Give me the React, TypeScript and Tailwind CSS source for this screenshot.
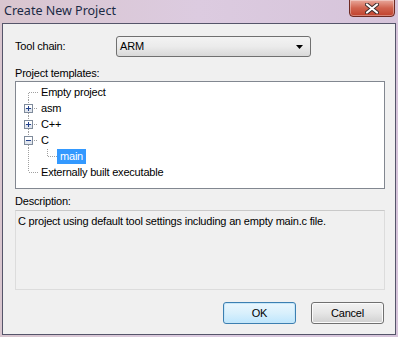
import React from 'react';

type Row = {
  label: string;
  kind: 'first' | 'plus' | 'minus' | 'child' | 'last';
  selected?: boolean;
};

const rows: Row[] = [
  { label: 'Empty project', kind: 'first' },
  { label: 'asm', kind: 'plus' },
  { label: 'C++', kind: 'plus' },
  { label: 'C', kind: 'minus' },
  { label: 'main', kind: 'child', selected: true },
  { label: 'Externally built executable', kind: 'last' },
];

const dot = { stroke: '#a0a0a0', strokeWidth: 1, strokeDasharray: '1 1' };

const Expander: React.FC<{ open: boolean }> = ({ open }) => (
  <g>
    <rect x="8.5" y="4.5" width="8" height="8" fill="#e1e6ee" stroke="#7f8b9b" />
    <rect x="9" y="5" width="7" height="3" fill="#ffffff" />
    <path d="M10 8.5h5" stroke="#22418c" strokeWidth="1" />
    {!open && <path d="M12.5 6v5" stroke="#22418c" strokeWidth="1" />}
  </g>
);

const Connector: React.FC<{ kind: Row['kind'] }> = ({ kind }) => {
  const w = kind === 'child' ? 41 : 25;
  return (
    <svg width={w} height={16} className="shrink-0">
      {kind === 'first' && (
        <>
          <path d="M12.5 9v7" {...dot} />
          <path d="M13 8.5h9" {...dot} />
        </>
      )}
      {(kind === 'plus' || kind === 'minus') && (
        <>
          <path d="M12.5 0v4M12.5 13v3" {...dot} />
          <path d="M18 8.5h4" {...dot} />
          <Expander open={kind === 'minus'} />
        </>
      )}
      {kind === 'child' && (
        <>
          <path d="M12.5 0v16" {...dot} />
          <path d="M31.5 1v7" {...dot} />
          <path d="M32 8.5h9" {...dot} />
        </>
      )}
      {kind === 'last' && (
        <>
          <path d="M12.5 0v8" {...dot} />
          <path d="M13 8.5h9" {...dot} />
        </>
      )}
    </svg>
  );
};

const App: React.FC = () => {
  return (
    <div
      className="w-[398px] h-[337px] flex flex-col bg-gradient-to-r from-[#d9c6cf] via-[#dccbe0] to-[#d6c4da] text-[11px] tracking-[-0.2px] text-black"
      style={{ fontFamily: '"Liberation Sans", Arial, sans-serif' }}
    >
      {/* title bar */}
      <div className="h-[23px] shrink-0 flex items-start justify-between">
        <span
          className="pl-[4px] pt-[2px] text-[12.5px] tracking-normal text-[#1b2a44]"
          style={{ fontFamily: '"Noto Sans", "Open Sans", sans-serif' }}
        >
          Create New Project
        </span>
        <button className="mr-[3px] w-[46px] h-[18px] -mt-px rounded-b-[4px] border border-[#6e2a22] bg-gradient-to-b from-[#e8a89c] via-[#d0634f] to-[#c0412c] flex items-center justify-center shadow-[inset_0_0_0_1px_rgba(255,255,255,0.35)]">
          <svg width="14" height="11" viewBox="0 0 14 11">
            <path d="M2 1.5l10 8M12 1.5l-10 8" stroke="#3a2a2a" strokeWidth="4" strokeLinecap="round" />
            <path d="M2 1.5l10 8M12 1.5l-10 8" stroke="#ffffff" strokeWidth="2.2" strokeLinecap="round" />
          </svg>
        </button>
      </div>

      {/* client area */}
      <div className="mx-[2px] mb-[2px] flex-1 border border-[#55556a] bg-[#f0f0f0] flex flex-col pl-[12px] pr-[10px]">
        <div className="mt-[12px] flex items-center h-[21px]">
          <span className="w-[101px]">Tool chain:</span>
          <div className="w-[195px] h-[21px] rounded-[3px] border border-[#707070] bg-gradient-to-b from-[#f3f3f3] via-[#ebebeb] to-[#d9d9d9] flex items-center justify-between pl-[3px] pr-[7px]">
            <span>ARM</span>
            <svg width="7" height="4" viewBox="0 0 7 4">
              <path d="M0 0h7L3.5 4z" fill="#000" />
            </svg>
          </div>
        </div>

        <div className="mt-[9px] leading-[14px]">Project templates:</div>

        <div className="mt-[1px] w-[370px] h-[108px] border border-[#828790] bg-white pt-[2px]">
          {rows.map((r) => (
            <div key={r.label} className="h-[16px] flex items-center">
              <Connector kind={r.kind} />
              {r.selected ? (
                <span className="bg-[#3399ff] text-white px-[3px] leading-[15px]">{r.label}</span>
              ) : (
                <span className="leading-[15px]">{r.label}</span>
              )}
            </div>
          ))}
        </div>

        <div className="mt-[5px] leading-[14px]">Description:</div>

        <div className="mt-[2px] w-[370px] h-[80px] border border-[#dcdcdc] border-t-[#c9c9c9] bg-[#f0f0f0] px-[2px] pt-[2px]">
          C project using default tool settings including an empty main.c file.
        </div>

        <div className="mt-[12px] flex justify-end gap-[15px] pr-[1px]">
          <button className="w-[73px] h-[22px] rounded-[3px] border border-[#3c7fb1] bg-gradient-to-b from-[#eaf6fd] via-[#d9f0fc] to-[#bee6fd] shadow-[inset_0_0_0_1px_#c6e6f8] text-black">
            OK
          </button>
          <button className="w-[73px] h-[22px] rounded-[3px] border border-[#707070] bg-gradient-to-b from-[#f2f2f2] via-[#e6e6e6] to-[#d0d0d0] shadow-[inset_0_0_0_1px_#fbfbfb] text-black">
            Cancel
          </button>
        </div>
      </div>
    </div>
  );
};

export default App;
